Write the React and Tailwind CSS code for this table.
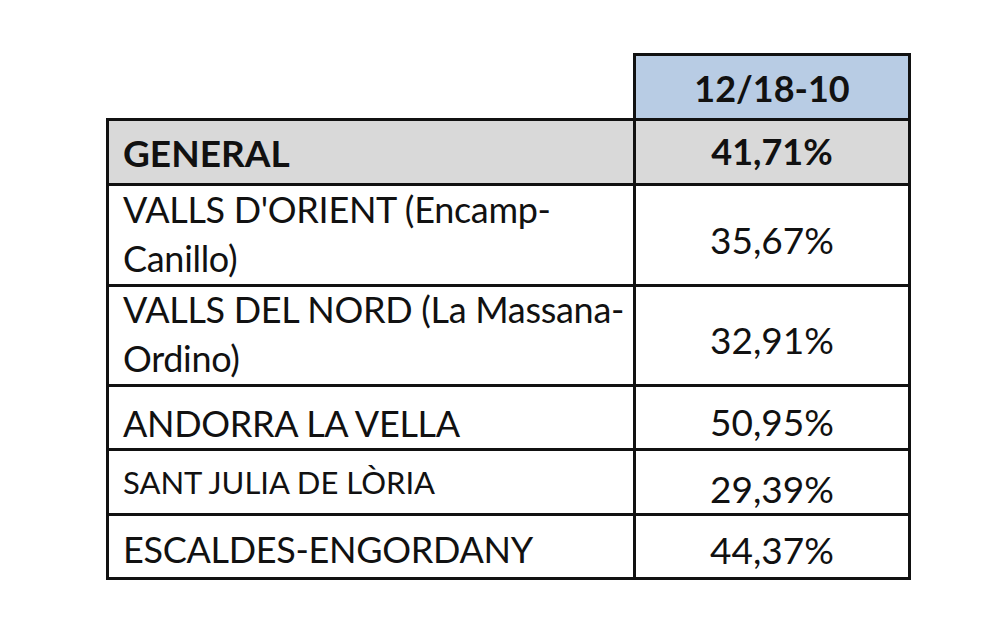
export default function App() {
  const rows = [
    { label: ["VALLS D'ORIENT (Encamp-", "Canillo)"], value: "35,67%", h: "h-[98px]", lpb: "pb-[1px]", vAlign: "items-center", vpt: "pt-[8px]" },
    { label: ["VALLS DEL NORD (La Massana-", "Ordino)"], value: "32,91%", h: "h-[97px]", lpb: "pb-[1px]", vAlign: "items-center", vpt: "pt-[8px]" },
    { label: ["ANDORRA LA VELLA"], value: "50,95%", h: "h-[61px]", lpb: "pb-[0px]", vAlign: "items-end", vpt: "pb-[2px]" },
    { label: ["SANT JULIA DE LÒRIA"], value: "29,39%", h: "h-[62px]", lpb: "pb-[6px]", small: true, vAlign: "items-end", vpt: "pb-[0px]" },
    { label: ["ESCALDES-ENGORDANY"], value: "44,37%", h: "h-[61px]", lpb: "pb-[3px]", vAlign: "items-end", vpt: "pb-[3px]" },
  ];
  return (
    <div className="w-[1000px] h-[640px] bg-white font-['Lato',sans-serif] text-[#111]">
      <div className="pt-[53px] pl-[106px]">
        <div className="flex">
          <div className="w-[527px]" />
          <div className="w-[278px] h-[65px] border-x-[3px] border-t-[3px] border-[#111] bg-[#b8cce4] flex items-end justify-center pb-[5px]">
            <span className="text-[36px] leading-[49px] font-bold">12/18-10</span>
          </div>
        </div>
        <div className="w-[805px] bg-[#111] p-[3px] grid grid-cols-[524px_272px] gap-[3px]">
          <div className="h-[62px] bg-[#d9d9d9] flex items-end pl-[14px] pb-[6px]">
            <span className="text-[37px] leading-[49px] font-bold">GENERAL</span>
          </div>
          <div className="h-[62px] bg-[#d9d9d9] flex items-end justify-center pb-[7px]">
            <span className="text-[36px] leading-[49px] font-bold">41,71%</span>
          </div>
          {rows.map((r) => (
            <>
              <div key={r.value + "l"} className={`${r.h} bg-white flex flex-col justify-end pl-[14px] ${r.lpb}`}>
                {r.label.map((t) => (
                  <span key={t} className={r.small ? "text-[31px] leading-[49px]" : "text-[36px] leading-[49px] tracking-[-0.3px]"}>{t}</span>
                ))}
              </div>
              <div key={r.value + "r"} className={`${r.h} bg-white flex justify-center ${r.vAlign} ${r.vpt}`}>
                <span className="text-[37px] leading-[49px]">{r.value}</span>
              </div>
            </>
          ))}
        </div>
      </div>
    </div>
  );
}
